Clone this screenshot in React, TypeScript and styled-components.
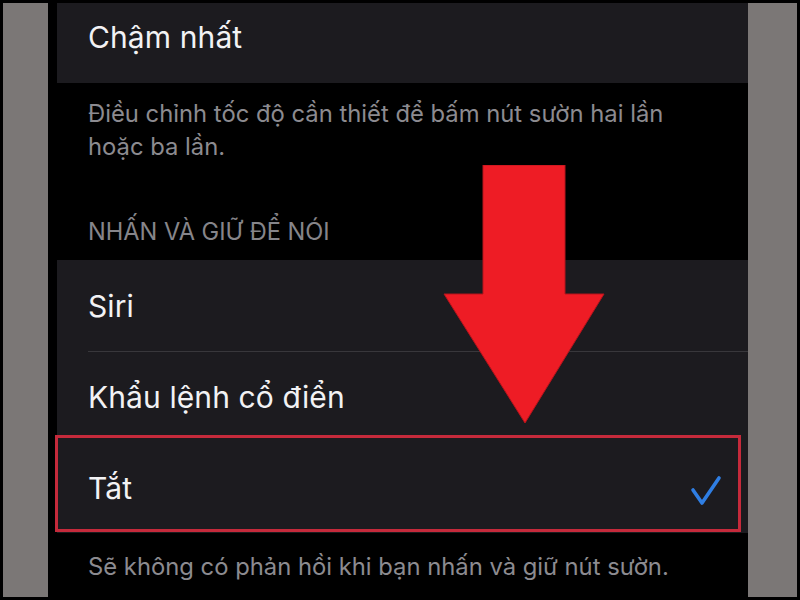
import React from 'react';
import styled, { createGlobalStyle } from 'styled-components';

const GlobalStyle = createGlobalStyle`
  html, body {
    margin: 0;
    padding: 0;
    background: #000;
  }
  body {
    font-family: Inter, "Noto Sans", "DejaVu Sans", sans-serif;
    -webkit-font-smoothing: antialiased;
  }
`;

const Frame = styled.div`
  position: relative;
  width: 800px;
  height: 600px;
  box-sizing: border-box;
  padding: 3px;
  background: #000;
  display: flex;
  overflow: hidden;
`;

const SideBar = styled.div<{ $w: number }>`
  width: ${(p) => p.$w}px;
  flex-shrink: 0;
  background: #7b7776;
`;

const Gutter = styled.div`
  width: 9px;
  flex-shrink: 0;
  background: #000;
`;

const Screen = styled.div`
  flex: 1;
  display: flex;
  flex-direction: column;
  background: #000;
`;

const Cell = styled.div<{ $h?: number; $pb?: number }>`
  position: relative;
  height: ${(p) => p.$h ?? 91}px;
  box-sizing: border-box;
  padding: 0 26px ${(p) => p.$pb ?? 0}px 31px;
  background: #1c1b1f;
  display: flex;
  align-items: center;
  justify-content: space-between;
`;

const CellLabel = styled.span`
  color: #f2f2f4;
  font-size: 30px;
  line-height: 36px;
  letter-spacing: 0.1px;
`;

const Separator = styled.div`
  height: 1px;
  margin-left: 31px;
  background: #38373b;
`;

const Group = styled.div`
  display: flex;
  flex-direction: column;
  background: #1c1b1f;
`;

const FooterText = styled.p<{ $pt: number }>`
  margin: 0;
  padding: ${(p) => p.$pt}px 60px 0 31px;
  color: #8c8b90;
  font-size: 23.8px;
  line-height: 33px;
`;

const SectionHeader = styled.div`
  margin: 55px 0 14px;
  padding-left: 31px;
  color: #86858a;
  font-size: 23.6px;
  line-height: 28px;
  text-transform: uppercase;
`;

const Highlight = styled.div`
  position: absolute;
  left: -2px;
  right: 7px;
  top: -7px;
  bottom: 1px;
  border: 3px solid #c52a3b;
  pointer-events: none;
`;

const Arrow = styled.svg`
  position: absolute;
  left: 443px;
  top: 165px;
`;

const Check = () => (
  <svg width="32" height="36" viewBox="0 0 32 36" fill="none">
    <polyline
      points="3,20 12,33 29,8"
      stroke="#2f7ee3"
      strokeWidth="3.6"
      strokeLinecap="round"
      strokeLinejoin="round"
    />
  </svg>
);

export default function App() {
  return (
    <>
      <GlobalStyle />
      <Frame>
        <SideBar $w={45} />
        <Gutter />
        <Screen>
          <Cell $h={80} $pb={12}>
            <CellLabel>Chậm nhất</CellLabel>
          </Cell>
          <FooterText $pt={14}>
            Điều chỉnh tốc độ cần thiết để bấm nút sườn hai lần hoặc ba lần.
          </FooterText>
          <SectionHeader>Nhấn và giữ để nói</SectionHeader>
          <Group>
            <Cell>
              <CellLabel>Siri</CellLabel>
            </Cell>
            <Separator />
            <Cell $h={90}>
              <CellLabel>Khẩu lệnh cổ điển</CellLabel>
            </Cell>
            <Cell>
              <CellLabel>Tắt</CellLabel>
              <Check />
              <Highlight />
            </Cell>
          </Group>
          <FooterText $pt={17}>
            Sẽ không có phản hồi khi bạn nhấn và giữ nút sườn.
          </FooterText>
        </Screen>
        <SideBar $w={49} />
        <Arrow width="162" height="260" viewBox="0 0 162 260">
          <polygon
            points="40,0 122,0 122,129 161,129 82,258 1,129 40,129"
            fill="#ee1c25"
            stroke="#b5141c"
            strokeWidth="1"
          />
        </Arrow>
      </Frame>
    </>
  );
}
